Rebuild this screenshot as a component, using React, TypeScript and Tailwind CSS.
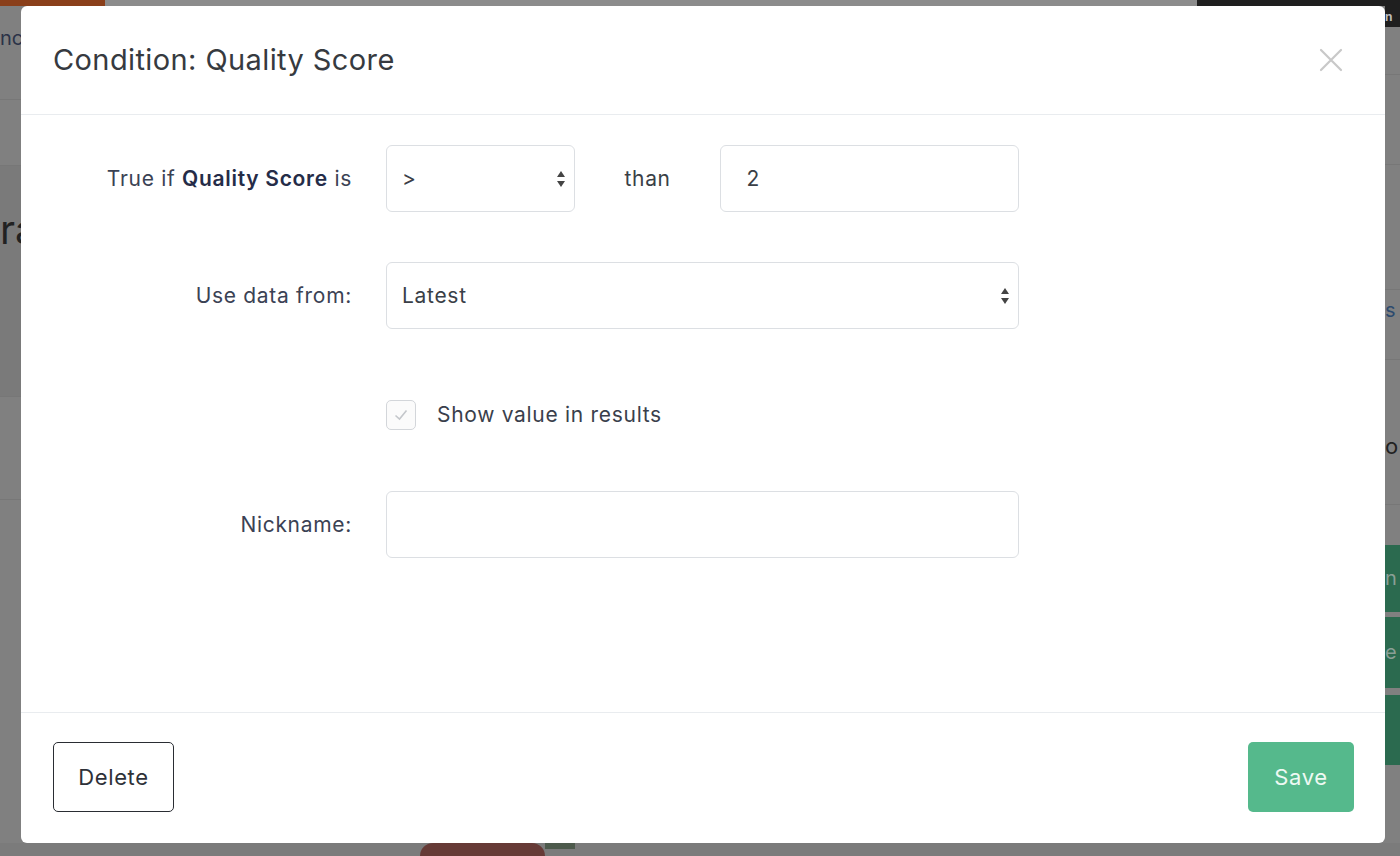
import type { ReactElement } from "react";

const font = { fontFamily: "Inter, 'Noto Sans', 'Liberation Sans', sans-serif" };

function Arrows(): ReactElement {
  return (
    <svg width="10" height="22" viewBox="0 0 10 22" className="text-[#444]">
      <path d="M5 3 L9 9 L1 9 Z" fill="currentColor" />
      <path d="M5 19 L9 13 L1 13 Z" fill="currentColor" />
    </svg>
  );
}

function Background(): ReactElement {
  return (
    <div className="flex h-full flex-col">
      <div className="flex h-[6px] shrink-0">
        <div className="w-[105px] bg-[#8a3f1a]" />
        <div className="flex-1 bg-[#8c8c8c]" />
        <div className="w-[203px] bg-[#1f1f1f]" />
      </div>
      <div className="flex flex-1">
        <div className="flex w-[21px] flex-col">
          <div className="h-[94px] border-b border-[#777] pt-[22px] text-[20px] leading-none text-[#2b3348]">nc</div>
          <div className="h-[65px]" />
          <div className="h-[232px] border-y border-[#777] bg-[#7a7a7a] pt-[44px] text-[40px] leading-none text-[#222]">ra</div>
          <div className="h-[103px] border-b border-[#777]" />
          <div className="flex-1" />
        </div>
        <div className="flex-1" />
        <div className="flex w-[15px] flex-col overflow-hidden">
          <div className="h-[21px] bg-[#1f1f1f] text-[12px] font-bold leading-[21px] text-[#bbb]">n</div>
          <div className="h-[48px] border-b border-[#777]" />
          <div className="h-[90px] border-b border-[#777]" />
          <div className="h-[125px] border-b border-[#777]" />
          <div className="h-[70px] border-b border-[#777] text-[20px] leading-[40px] text-[#2c4a6e]">s</div>
          <div className="h-[145px] border-b border-[#777] pt-[75px] text-[22px] leading-none text-[#222]">o</div>
          <div className="h-[40px]" />
          <div className="h-[67px] bg-[#2b6a4f] text-[20px] leading-[67px] text-[#8a9f96]">n</div>
          <div className="h-[5px]" />
          <div className="h-[71px] bg-[#2b6a4f] text-[20px] leading-[71px] text-[#8a9f96]">e</div>
          <div className="h-[7px]" />
          <div className="h-[70px] bg-[#2b6a4f]" />
          <div className="flex-1" />
        </div>
      </div>
      <div className="flex h-[13px] shrink-0 bg-[#7b7b7b]">
        <div className="ml-[420px] w-[125px] rounded-t-[30px] bg-[#663a36]" />
        <div className="h-[6px] w-[30px] bg-[#4d5a4c]" />
      </div>
    </div>
  );
}

export default function App(): ReactElement {
  return (
    <div className="relative h-[856px] w-[1400px] overflow-hidden bg-[#808080]" style={font}>
      <Background />

      <div className="absolute left-[21px] top-[6px] flex h-[837px] w-[1364px] flex-col rounded-[6px] bg-white">
        <header className="flex h-[109px] shrink-0 items-center justify-between border-b border-[#e9ecef] pl-[32px] pr-[42px]">
          <h1 className="text-[29px] font-normal tracking-[0.4px] text-[#363a40]">Condition: Quality Score</h1>
          <button type="button" className="text-[#c8c8c8]">
            <svg width="24" height="24" viewBox="0 0 24 24" stroke="currentColor" strokeWidth="2.2" strokeLinecap="round">
              <path d="M2 2 L22 22 M22 2 L2 22" />
            </svg>
          </button>
        </header>

        <section className="flex-1 pl-[32px] pt-[30px] text-[21px] tracking-[0.7px] text-[#3b4254]">
          <div className="grid grid-cols-[299px_633px] gap-x-[34px]">
            <div className="flex h-[67px] items-center justify-end">
              <span>
                True if <b className="font-semibold text-[#252c48]">Quality Score</b> is
              </span>
            </div>
            <div className="flex h-[67px] items-center">
              <div className="flex h-full w-[189px] items-center justify-between rounded-[6px] border border-[#dcdfe3] pl-[15px] pr-[8px] text-[#3a3f47]">
                <span>&gt;</span>
                <Arrows />
              </div>
              <span className="w-[146px] text-center text-[#3a3f47]">than</span>
              <div className="flex h-full w-[299px] items-center rounded-[6px] border border-[#dcdfe3] pl-[25px] text-[#3a3f47]">
                2
              </div>
            </div>

            <div className="mt-[50px] flex h-[67px] items-center justify-end">Use data from:</div>
            <div className="mt-[50px] flex h-[67px] items-center justify-between rounded-[6px] border border-[#dcdfe3] pl-[15px] pr-[8px] text-[#3a3f47]">
              <span>Latest</span>
              <Arrows />
            </div>

            <div className="mt-[71px] h-[30px]" />
            <label className="mt-[71px] flex h-[30px] items-center gap-[21px]">
              <span className="flex h-[30px] w-[30px] items-center justify-center rounded-[5px] border border-[#d3d6da] bg-[#fbfbfb]">
                <svg width="18" height="18" viewBox="0 0 18 18" fill="none" stroke="#c4c7cb" strokeWidth="1.6">
                  <path d="M3.5 9.5 L7.5 13 L14.5 4.5" />
                </svg>
              </span>
              <span className="text-[#3a3f4c]">Show value in results</span>
            </label>

            <div className="mt-[61px] flex h-[67px] items-center justify-end">Nickname:</div>
            <div className="mt-[61px] h-[67px] rounded-[6px] border border-[#dcdfe3]" />
          </div>
        </section>

        <footer className="flex h-[131px] shrink-0 items-start justify-between border-t border-[#e9ecef] pl-[32px] pr-[31px] pt-[29px]">
          <button
            type="button"
            className="h-[70px] w-[121px] rounded-[5px] border-[1.5px] border-[#2a2d33] text-[22px] tracking-[0.6px] text-[#2e3138]"
          >
            Delete
          </button>
          <button
            type="button"
            className="h-[70px] w-[106px] rounded-[5px] bg-[#55b98c] text-[22px] tracking-[0.6px] text-[#eef9f3]"
          >
            Save
          </button>
        </footer>
      </div>
    </div>
  );
}
